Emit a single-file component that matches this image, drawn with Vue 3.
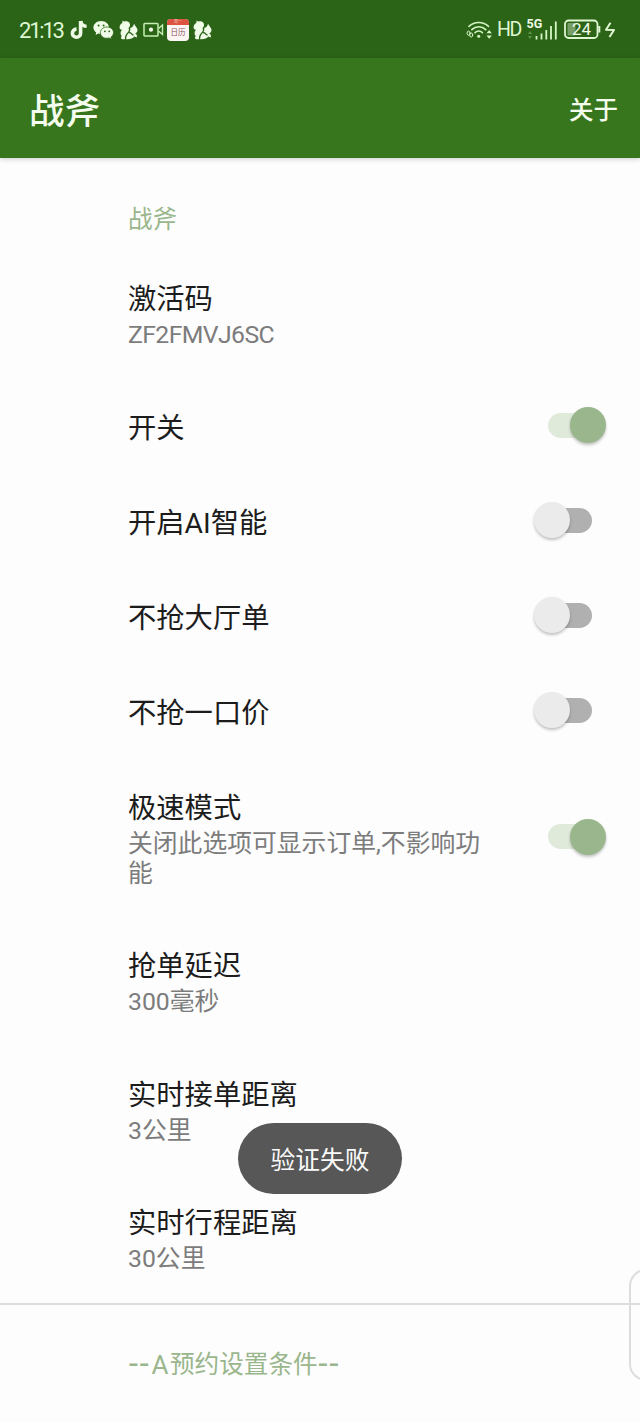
<template>
  <div class="screen">
    <div class="status-bar">
      <span class="time">21:13</span>
      <svg class="icon tiktok" width="18" height="20" viewBox="0 0 18 20">
        <path d="M10.6 1v12.2a4.1 4.1 0 1 1-4.1-4.1" fill="none" stroke="#effbe6" stroke-width="3.6" />
        <path d="M10.6 1c.4 3.4 2.6 5.2 6 5.4" fill="none" stroke="#effbe6" stroke-width="3.4" />
      </svg>
      <svg class="icon wechat" width="21" height="20" viewBox="0 0 21 20">
        <path d="M8.2 1C3.8 1 .4 3.9.4 7.6c0 2.1 1.1 3.8 2.8 5L2.6 15l2.8-1.4c1 .3 1.9.4 2.9.4 4.3 0 7.7-2.9 7.7-6.5S12.5 1 8.2 1z" fill="#effbe6" />
        <circle cx="5.6" cy="5.6" r="1" fill="#2b6417" />
        <circle cx="10.6" cy="5.6" r="1" fill="#2b6417" />
        <path d="M14 7c-3.8 0-6.6 2.5-6.6 5.7s2.8 5.6 6.6 5.6c.8 0 1.5-.1 2.2-.3l2.3 1.2-.5-2.2c1.6-1 2.5-2.5 2.5-4.3C20.5 9.5 17.7 7 14 7z" fill="#effbe6" stroke="#2b6417" stroke-width=".8" />
        <circle cx="11.9" cy="11.3" r=".9" fill="#2b6417" />
        <circle cx="16.2" cy="11.3" r=".9" fill="#2b6417" />
      </svg>
      <svg class="icon squirrel" width="19" height="20" viewBox="0 0 19 20">
        <path :d="squirrelBody" fill="#effbe6" />
        <path :d="squirrelTail" fill="#effbe6" />
        <path :d="squirrelLine" fill="none" stroke="#2b6417" stroke-width="1.3" />
      </svg>
      <svg class="icon camera" width="21" height="16" viewBox="0 0 21 16">
        <rect x="1" y="1.5" width="14" height="12.5" rx=".8" fill="none" stroke="#c5f0b4" stroke-width="1.5" />
        <circle cx="8" cy="7.7" r="2.1" fill="#effbe6" />
        <path d="M15.5 6.5l4-3.5v9.5l-4-3.5" fill="none" stroke="#c5f0b4" stroke-width="1.4" />
      </svg>
      <div class="calendar">
        <div class="calendar-top">周一</div>
        <div class="calendar-text">日历</div>
      </div>
      <svg class="icon squirrel-last" width="19" height="20" viewBox="0 0 19 20">
        <path :d="squirrelBody" fill="#effbe6" />
        <path :d="squirrelTail" fill="#effbe6" />
        <path :d="squirrelLine" fill="none" stroke="#2b6417" stroke-width="1.3" />
      </svg>

      <div class="status-right">
        <svg class="wifi" width="27" height="20" viewBox="0 0 27 20">
          <g fill="none" stroke="#d5f5c5" stroke-width="1.6" stroke-linecap="round">
            <path d="M3 6.4c5.5-5.2 14-5.2 19.5 0" />
            <path d="M5.8 9.6c4-3.8 10-3.8 14 0" />
            <path d="M9 12.7c2.3-2.1 5.2-2.1 7.4 0" />
            <ellipse cx="2.6" cy="13.2" rx="1.5" ry="2.1" stroke-width="1" />
            <ellipse cx="5.2" cy="15" rx="1.5" ry="2.1" stroke-width="1" />
          </g>
          <circle cx="12.7" cy="16.2" r="1.5" fill="#d5f5c5" />
          <path d="M20.5 13.3l2.7-3.3 2.7 3.3zM20.5 15.4l2.7 3.4 2.7-3.4z" fill="#d5f5c5" />
        </svg>
        <span class="hd">HD</span>
        <svg class="signal" width="31" height="24" viewBox="0 0 31 24">
          <text x="-0.5" y="9.5" class="five-g">5G</text>
          <path d="M.8 16l2.2-3 2.2 3zM.8 18l2.2 3 2.2-3z" fill="#5c9248" />
          <path d="M9.500 18v3.500M14.500 15.500v6M19.300 12v9.500M24 8v13.500M28.800 3.500v18" stroke="#d5f5c5" stroke-width="1.800" />
        </svg>
        <svg class="battery" width="37" height="21" viewBox="0 0 37 21">
          <rect x="1" y="1.5" width="32.5" height="17.5" rx="3.5" fill="none" stroke="#dff6d3" stroke-width="1.8" />
          <rect x="3.5" y="4" width="8" height="12.5" rx="1" fill="#789f67" />
          <path d="M35.3 7v6.5" stroke="#dff6d3" stroke-width="2" />
          <text x="17.5" y="16" text-anchor="middle" class="battery-text">24</text>
        </svg>
        <svg class="bolt" width="12" height="18" viewBox="0 0 12 18">
          <path d="M6.5 1.8L2 8.8l8 .2L5.5 16" fill="none" stroke="#dff6d3" stroke-width="2" stroke-linejoin="round" />
        </svg>
      </div>
    </div>

    <div class="app-bar">
      <div class="app-title">战斧</div>
      <div class="about">关于</div>
    </div>

    <div class="section-title first">战斧</div>

    <div v-for="item in items" :key="item.title" class="row" @click="toggle(item)">
      <div class="row-text">
        <div class="title">{{ item.title }}</div>
        <div v-if="item.summary" class="summary" :class="{ code: item.code }">{{ item.summary }}</div>
      </div>
      <div v-if="item.on !== undefined" class="switch" :class="{ on: item.on }">
        <div class="thumb"></div>
      </div>
    </div>

    <div class="section-title second"><span class="dash">--</span><span class="letter">A</span>预约设置条件<span class="dash">--</span></div>

    <div class="toast">验证失败</div>
    <div class="side-handle"></div>
  </div>
</template>

<script setup>
import { ref } from 'vue'

const squirrelBody = 'M3.5 .8L5.5 1.5C9 .3 11.500 3 11 5.500C10.800 6.700 10 7.300 9.500 8C10.300 9.500 10 11 8.500 12.500C6.500 14.500 5.800 16 6 19.200H3.500C1.500 18.800 1.500 17.200 2.800 16.300C1 14.500 1.200 11.500 3 9.800C1 9.800 .2 8 .7 6.300C1.200 4.500 2.200 3.500 3.300 3Z'
const squirrelTail = 'M15 3.800C16 6 18.500 8 18.500 10C18.500 11.800 17.500 13 16 13.300C17.800 14 18.300 15.800 17.800 17.500L15.200 16.500C14 18.700 11 19.400 7.200 19.200C7.200 15.500 8.500 14.300 10.200 12.500C11.300 11.200 11.500 9.500 11.200 8C13 7.500 14.500 6.500 15 3.800Z'
const squirrelLine = 'M9.800 12.800C12.500 11.800 12 14.800 14.500 15'

const items = ref([
  { title: '激活码', summary: 'ZF2FMVJ6SC', code: true },
  { title: '开关', on: true },
  { title: '开启AI智能', on: false },
  { title: '不抢大厅单', on: false },
  { title: '不抢一口价', on: false },
  { title: '极速模式', summary: '关闭此选项可显示订单,不影响功能', on: true },
  { title: '抢单延迟', summary: '300毫秒' },
  { title: '实时接单距离', summary: '3公里' },
  { title: '实时行程距离', summary: '30公里' },
])

function toggle(item) {
  if (item.on !== undefined) {
    item.on = !item.on
  }
}
</script>

<style>
body {
  margin: 0;
  background: #fdfdfd;
}
</style>

<style scoped>
.screen {
  position: relative;
  width: 640px;
  height: 1422px;
  overflow: hidden;
  background: #fdfdfd;
  font-family: Roboto, "Noto Sans CJK SC", sans-serif;
}
.status-bar {
  display: flex;
  align-items: center;
  box-sizing: border-box;
  height: 58px;
  padding: 1px 24px 0 19px;
  background: #2b6417;
  color: #dff6d3;
}
.time {
  width: 51px;
  padding-top: 2px;
  font-size: 22px;
  letter-spacing: -2.2px;
  white-space: nowrap;
}
.icon {
  flex: none;
}
.wechat {
  margin-left: 5px;
}
.squirrel {
  margin-left: 5px;
}
.camera {
  margin-left: 5px;
}
.calendar {
  width: 22px;
  height: 22px;
  margin-left: 3px;
  border-radius: 4px;
  overflow: hidden;
  background: #fbf6f3;
  text-align: center;
}
.calendar-top {
  height: 6px;
  background: #dc5342;
  color: #f8c9bf;
  font-size: 4px;
  line-height: 6px;
}
.calendar-text {
  color: #8c5360;
  font-size: 7.5px;
  line-height: 15px;
}
.squirrel-last {
  margin-left: 4px;
}
.status-right {
  display: flex;
  align-items: center;
  margin-left: auto;
}
.hd {
  width: 25px;
  margin-left: 4px;
  margin-right: 5px;
  font-size: 19.5px;
  letter-spacing: -1.5px;
}
.signal {
  margin-right: 6px;
  overflow: visible;
}
.five-g {
  fill: #effbe6;
  font-size: 12.5px;
  font-weight: 700;
}
.battery-text {
  fill: #effbe6;
  font-size: 17px;
}
.bolt {
  margin-left: 3px;
}
.app-bar {
  position: relative;
  display: flex;
  align-items: center;
  justify-content: space-between;
  box-sizing: border-box;
  height: 100px;
  padding: 0 22px 0 29px;
  background: #37761d;
  color: #f4fdee;
  font-weight: 500;
  box-shadow: 0 1px 5px rgba(0, 0, 0, 0.2);
}
.app-title {
  font-size: 35.5px;
}
.about {
  font-size: 24.5px;
}
.section-title {
  padding-left: 128px;
  color: #9ab68c;
  font-size: 24.6px;
  line-height: 30px;
}
.first {
  padding-top: 47px;
  padding-bottom: 15.5px;
}
.second {
  display: flex;
  padding-top: 44.5px;
  border-top: 2px solid #dedede;
}
.dash {
  width: 22px;
  font-family: "DejaVu Sans", sans-serif;
  font-size: 30px;
  line-height: 26px;
}
.letter {
  width: 20px;
  text-align: center;
  font-size: 26px;
}
.row {
  display: flex;
  align-items: center;
  justify-content: space-between;
  padding: 28.5px 48px 28.5px 128px;
}
.row-text {
  position: relative;
  top: 2.2px;
  width: 364px;
}
.title {
  color: #1c1c1c;
  font-size: 28.3px;
  line-height: 38px;
}
.summary {
  margin: 1px 0 2.5px;
  color: #7c7c7c;
  font-size: 24.8px;
  line-height: 30px;
}
.code {
  letter-spacing: -0.6px;
}
.switch {
  position: relative;
  width: 44px;
  height: 25px;
  margin-bottom: 3px;
  border-radius: 13px;
  background: #b0b0b0;
}
.thumb {
  position: absolute;
  top: -5.5px;
  left: -14px;
  width: 36px;
  height: 36px;
  border-radius: 50%;
  background: #ebebeb;
  box-shadow: 0 2px 3px rgba(0, 0, 0, 0.24);
}
.switch.on {
  background: #e0eadb;
}
.on .thumb {
  left: 21.5px;
  background: #9ab68c;
}
.toast {
  position: absolute;
  left: 238px;
  top: 1123px;
  width: 164px;
  height: 71px;
  border-radius: 36px;
  background: #575757;
  color: #fafafa;
  font-size: 24.7px;
  line-height: 75px;
  text-align: center;
}
.side-handle {
  position: absolute;
  left: 629px;
  top: 1269px;
  box-sizing: border-box;
  width: 40px;
  height: 112px;
  border: 2px solid #dddddd;
  border-radius: 17px;
}
</style>
